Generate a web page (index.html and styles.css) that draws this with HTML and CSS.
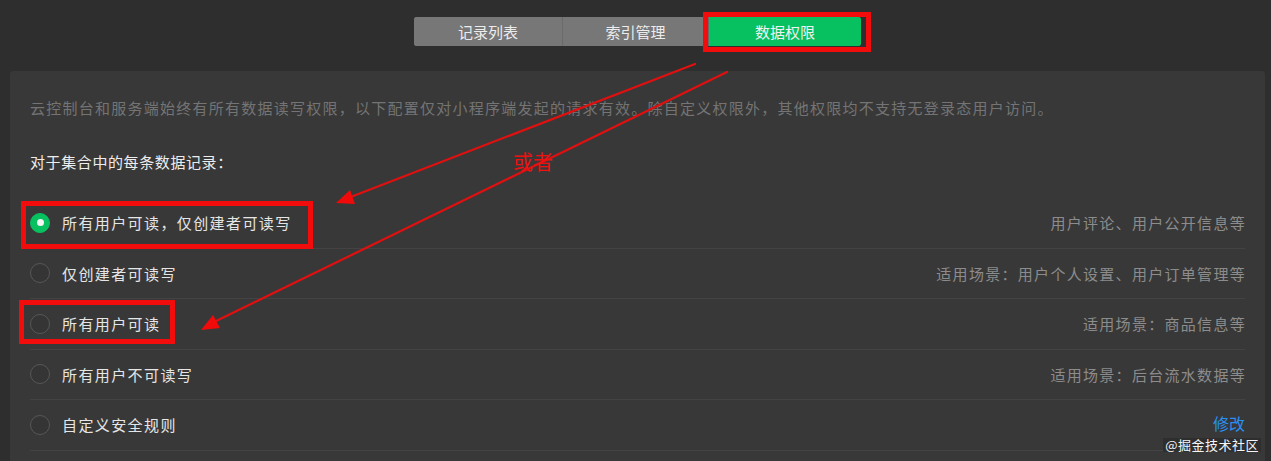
FILE: index.html
```html
<!DOCTYPE html>
<html lang="zh">
<head>
<meta charset="utf-8">
<link rel="stylesheet" href="styles.css">
</head>
<body>
<div class="page">
  <div class="tabs-bar">
    <div class="tabs">
      <div class="tab">记录列表</div>
      <div class="tab">索引管理</div>
      <div class="tab active">数据权限</div>
    </div>
  </div>
  <div class="panel">
    <p class="desc">云控制台和服务端始终有所有数据读写权限，以下配置仅对小程序端发起的请求有效。除自定义权限外，其他权限均不支持无登录态用户访问。</p>
    <p class="subtitle">对于集合中的每条数据记录：</p>
    <ul class="options">
      <li class="option"><span class="radio checked"></span><span class="label">所有用户可读，仅创建者可读写</span><span class="hint">用户评论、用户公开信息等</span></li>
      <li class="option"><span class="radio"></span><span class="label">仅创建者可读写</span><span class="hint">适用场景：用户个人设置、用户订单管理等</span></li>
      <li class="option"><span class="radio"></span><span class="label">所有用户可读</span><span class="hint">适用场景：商品信息等</span></li>
      <li class="option"><span class="radio"></span><span class="label">所有用户不可读写</span><span class="hint">适用场景：后台流水数据等</span></li>
      <li class="option"><span class="radio"></span><span class="label">自定义安全规则</span><span class="link">修改</span></li>
    </ul>
  </div>
  <svg class="annot" width="1271" height="461" viewBox="0 0 1271 461">
    <g fill="none" stroke="#f20c0c" stroke-width="5">
      <rect x="705.5" y="14.5" width="163" height="35"/>
      <rect x="23.5" y="203.5" width="287" height="43"/>
      <rect x="21.5" y="302.5" width="151" height="39"/>
    </g>
    <g stroke="#e01010" stroke-width="2.2" stroke-linecap="round">
      <line x1="695" y1="64" x2="348" y2="198"/>
      <line x1="727" y1="72" x2="212" y2="323"/>
    </g>
    <g fill="#f00a0a">
      <polygon points="336,203 350,190 355,204"/>
      <polygon points="201,330 213,315 220,328"/>
    </g>
    <text x="513" y="170" class="or">或者</text>
  </svg>
  <div class="watermark">@掘金技术社区</div>
</div>
</body>
</html>
```

FILE: styles.css
```css
* { box-sizing: border-box; }
html, body { margin: 0; padding: 0; }
body {
  background: #2e2e2e;
  font-family: "Noto Sans CJK SC", "Liberation Sans", sans-serif;
  width: 1271px;
  height: 461px;
  overflow: hidden;
}
.page {
  position: relative;
  width: 1271px;
  height: 461px;
  display: flex;
  flex-direction: column;
}
.tabs-bar {
  display: flex;
  justify-content: flex-start;
  padding: 17px 0 0 414px;
  height: 71px;
  flex: none;
}
.tabs {
  display: flex;
  height: 29px;
  border-radius: 3px;
  overflow: hidden;
  background: #7a7a7a;
}
.tab {
  width: 149px;
  display: flex;
  align-items: center;
  justify-content: center;
  color: #ececec;
  font-size: 15px;
  background: #777777;
  border-right: 1px solid #6a6a6a;
}
.tab:nth-child(2) { width: 146px; }
.tab.active {
  background: #07c160;
  color: #f2f2f2;
  border-right: none;
  width: 152px;
}
.panel {
  flex: 1;
  margin: 0 6px 0 10px;
  background: #383838;
  border-radius: 3px 3px 0 0;
  padding: 0 20px 0 20px;
}
.desc {
  margin: 0;
  padding-top: 27px;
  height: 81px;
  font-size: 15px;
  letter-spacing: 1.25px;
  line-height: 20px;
  color: #747474;
  white-space: nowrap;
}
.subtitle {
  margin: 0;
  font-size: 15px;
  letter-spacing: 0.6px;
  line-height: 20px;
  color: #ededed;
  height: 46px;
}
.options {
  list-style: none;
  margin: 0;
  padding: 0;
}
.option {
  display: flex;
  align-items: center;
  height: 50.5px;
  border-bottom: 1px solid #434343;
}
.radio {
  width: 20px;
  height: 20px;
  border-radius: 50%;
  border: 1px solid #575757;
  background: #353535;
  flex: none;
  margin-right: 12px;
  position: relative;
}
.radio.checked {
  background: #07c160;
  border-color: #07c160;
}
.radio.checked::after {
  content: "";
  position: absolute;
  left: 5.5px;
  top: 5.5px;
  width: 7px;
  height: 7px;
  border-radius: 50%;
  background: #f4f4f4;
}
.label {
  flex: 1;
  font-size: 15px;
  letter-spacing: 1.4px;
  color: #e6e6e6;
}
.hint {
  font-size: 15px;
  letter-spacing: 1.3px;
  color: #8c8c8c;
  margin-right: -1px;
}
.link {
  font-size: 16px;
  line-height: 18px;
  color: #2a8ff0;
  margin-bottom: 4px;
}
.annot {
  position: absolute;
  left: 0;
  top: 0;
  pointer-events: none;
}
.or {
  font-size: 20px;
  fill: #ee1111;
  font-family: "Noto Sans CJK SC", sans-serif;
}
.watermark {
  position: absolute;
  right: 10px;
  bottom: 9px;
  font-size: 13px;
  line-height: 14px;
  color: #f5f5f5;
  padding: 0 2px;
  letter-spacing: 0.5px;
  background: rgba(40, 40, 40, 0.6);
  font-family: "Noto Sans CJK SC", sans-serif;
}
```
